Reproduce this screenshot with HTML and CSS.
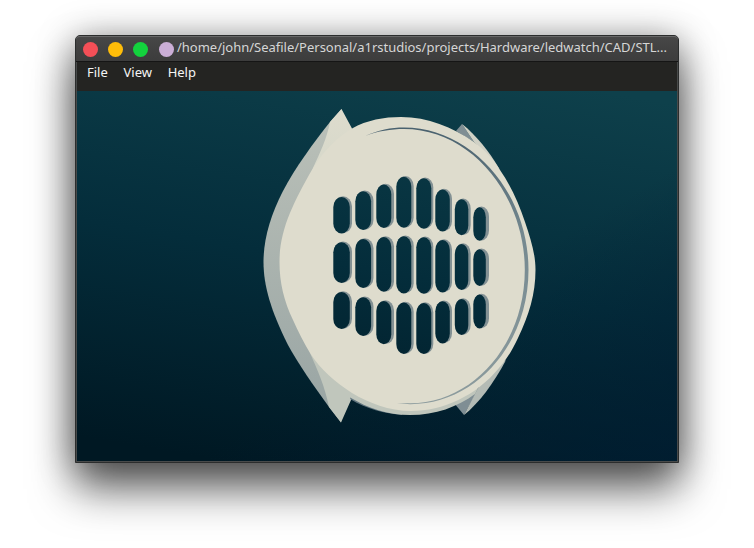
FILE: index.html
```html
<!DOCTYPE html>
<html lang="en">
<head>
<meta charset="utf-8">
<title>STL viewer</title>
<link rel="stylesheet" href="styles.css">
</head>
<body>
<main class="window">
  <header class="titlebar">
    <div class="buttons"><i class="dot red"></i><i class="dot yellow"></i><i class="dot green"></i><i class="dot violet"></i></div>
    <span class="title">/home/john/Seafile/Personal/a1rstudios/projects/Hardware/ledwatch/CAD/STL...</span>
  </header>
  <nav class="menubar"><span>File</span><span>View</span><span>Help</span></nav>
  <svg class="viewport" viewBox="77 91 600 370" width="600" height="370">
    <defs>
      <linearGradient id="bg" gradientUnits="userSpaceOnUse" x1="418" y1="60" x2="346" y2="482">
        <stop offset="0" stop-color="#0e404b"/><stop offset=".5" stop-color="#042d3b"/><stop offset="1" stop-color="#001823"/>
      </linearGradient>
      <linearGradient id="blue" x1="0" y1="0" x2="1" y2="1">
        <stop offset=".6" stop-color="#001c32" stop-opacity="0"/><stop offset="1" stop-color="#001c32" stop-opacity=".7"/>
      </linearGradient>
      <linearGradient id="side" x1="0" y1="0" x2="0" y2="1">
        <stop offset="0" stop-color="#bbc1b9"/><stop offset="1" stop-color="#98a4a3"/>
      </linearGradient>
      <linearGradient id="lug" x1="0" y1="0" x2="0" y2="1">
        <stop offset="0" stop-color="#dedccd"/><stop offset="1" stop-color="#d6d8ca"/>
      </linearGradient>
      <linearGradient id="groove" x1="0" y1="0" x2="0" y2="1">
        <stop offset="0" stop-color="#49616e"/><stop offset=".4" stop-color="#758990"/><stop offset="1" stop-color="#8d9c9e"/>
      </linearGradient>
    </defs>
    <rect x="77" y="91" width="600" height="370" fill="url(#bg)"/>
    <rect x="77" y="91" width="600" height="370" fill="url(#blue)"/>
    <!-- case sides and lugs -->
    <path fill="url(#side)" d="M341.5 109L330 122C314 142 295 168 283 191C270 216 263.5 240 263.5 262C263.5 286 271 311 288 345C299 365 313 385 329 407L341 422.500L345 370V150Z"/>
    <path fill="url(#lug)" d="M341.500 109L330 122C327 138 320 153 313 168L345 150L352 128.500Z"/>
    <path fill="#c0c6bc" d="M310 353C318 371 325 387 329 407L341 422.500L351 400L358 390L340 365Z"/>
    <path fill="#60747e" d="M350 399C366 409 385 413.500 402 415L400 407L352 395Z"/>
    <path fill="#7f8e94" d="M456 131L462 124L474 142Z"/>
    <path fill="#d0d1c5" d="M462 124C476 135 489 151 500 170L474 142Z"/>
    <path fill="#7f8e94" d="M454 403L464 415L479 388Z"/>
    <path fill="#b4bbb5" d="M464 415C479 403 494 383 506 360L485 375L475 394Z"/>
    <path fill="#c0c6bc" d="M351 398C368 408 387 415 410 415C436 415 457 407 475 394L482 380H350Z"/>
    <!-- front face -->
    <path fill="#dedccd" d="M279.500 262C279.500 230 293 203 313 168C325 149 339 136 352 128.500C367 120 384 117 401 117C428 117 452 127 474 142C486 151 494 160 500 170C511 186 519 204 525 222C531 240 535.500 254 535.500 270C535.500 294 529 315 518 338C512 351 506 360 499 368C476 396 443 411 411 411C389 411 369 403 352 393C335 382 321 370 310 353C304 343 298 331 293 320C284 301 279.500 283 279.500 262Z"/>
    <path fill="url(#groove)" d="M365 136C378 130 391 127.500 404 127.500C471 127.500 528.500 192 528.500 270C528.500 345 475 404.500 410 404.200L397 403L410 403.300C472 403.500 524.800 345 524.800 270C524.800 195 471 129 404 129C391 129 378 131 365 136Z"/>
    <g id="slots"></g>
  </svg>
</main>
<script src="slots.js"></script>
</body>
</html>
```
FILE: styles.css
```css
* { box-sizing: border-box; }
body { margin: 0; height: 548px; overflow: hidden; background: #fff; padding: 35px 75px; font-family: "Noto Sans", sans-serif; }
.window {
  width: 604px; height: 428px;
  border: 1px solid #2b2d2d;
  border-radius: 5px 5px 0 0;
  background: #484a4a;
  padding: 0 1px 1px;
  box-shadow: 0 26px 44px rgba(0,0,0,.6), 0 3px 36px rgba(0,0,0,.38);
}
.titlebar {
  height: 26px; margin: 0 -1px; padding-left: 7px;
  display: flex; align-items: center;
  border-top: 1px solid #686868; border-bottom: 1px solid #151515;
  border-radius: 4px 4px 0 0;
  background: linear-gradient(#474747, #3c3c3c);
}
.buttons { display: flex; gap: 10px; padding-top: 1px; }
.dot { width: 15px; height: 15px; border-radius: 50%; }
.red { background: #f44f57; }
.yellow { background: #ffbd09; }
.green { background: #13d23d; }
.violet { background: #cbaed6; margin-left: 1px; }
.title { margin-left: 3px; font-size: 13px; line-height: 21px; height: 24px; letter-spacing: -.01px; color: #d6d6d6; white-space: nowrap; }
.menubar { height: 29px; background: #242422; color: #f4f4f4; font-size: 13px; line-height: 20px; padding-left: 10px; display: flex; gap: 15.7px; }
.viewport { display: block; }
```
FILE: slots.js
```js
// Each column: left, right, shadow right, then top/bottom for its three slots.
const columns = [
  [333, 349.5, 352, 197, 233.5, 242.3, 283, 292, 329],
  [355, 370.8, 373.5, 191.3, 230, 239, 288, 297.2, 336],
  [376, 391, 394, 184.5, 228, 237, 291.7, 301, 344.3],
  [396, 411, 413.7, 176.7, 227.7, 236.3, 293.5, 302.5, 354],
  [416, 431, 433.3, 178.3, 228.7, 237.3, 293.7, 303, 354],
  [435, 449.5, 452, 189.5, 231.5, 240, 292.5, 301.3, 343.5],
  [454.5, 468, 470.7, 199.3, 235.3, 244, 290, 299, 335],
  [473, 485.5, 489, 207.3, 240.7, 249.3, 286, 294.5, 328.5]
];
const pill = (x, y, w, h, fill) =>
  `<rect x="${x}" y="${y}" width="${w}" height="${h}" rx="${w / 2}" ry="10" fill="${fill}"/>`;
let out = "";
for (const [l, r, s, ...rows] of columns) {
  for (let i = 0; i < 6; i += 2) {
    const top = rows[i], h = rows[i + 1] - top;
    out += pill(l + 1, top - 0.7, s - l - 1, h + 0.5, "#839194");
    out += pill(l + 0.3, top, r - l, h, "url(#bg)");
  }
}
document.getElementById("slots").innerHTML = out;
```
